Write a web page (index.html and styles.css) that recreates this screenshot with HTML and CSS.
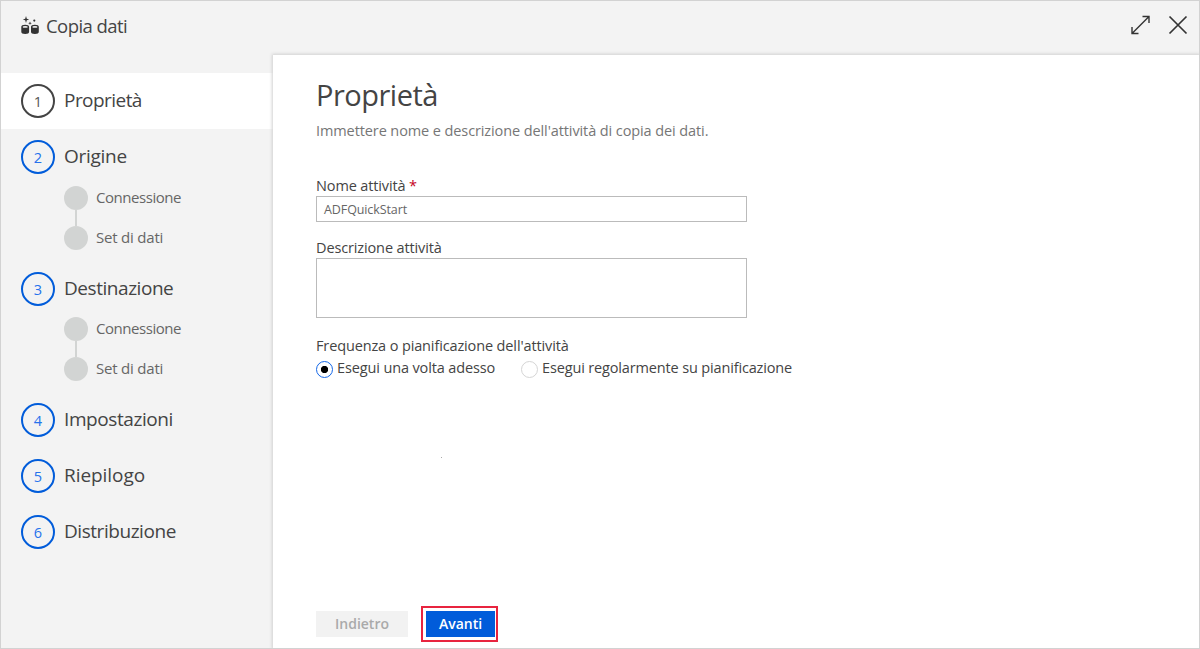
FILE: index.html
```html
<!DOCTYPE html>
<html lang="it">
<head>
<meta charset="utf-8">
<title>Copia dati</title>
<link rel="stylesheet" href="styles.css">
</head>
<body>
<div class="window">
  <header class="topbar">
    <svg class="logo" width="19" height="19" viewBox="0 0 19 19">
      <path d="M5 0l.8 2.700 2.400.8-2.400.8L5 7l-.8-2.700-2.400-.8 2.400-.8z"/>
      <path d="M9 5.500l.5 1.300 1.300.5-1.300.5-.5 1.300-.5-1.300-1.300-.5 1.300-.5z"/>
      <circle cx="13.300" cy="4.600" r="1.100"/>
      <path d="M.3 10.800q0-2 3.900-2t3.900 2v5q0 2.200-3.900 2.200T.3 15.800zM10 10.800q0-2 3.900-2t3.900 2v5q0 2.200-3.900 2.200T10 15.800z"/>
      <ellipse class="lid" cx="4.200" cy="10.900" rx="2.600" ry=".9"/>
      <ellipse class="lid" cx="13.900" cy="10.900" rx="2.600" ry=".9"/>
    </svg>
    <h2 class="app-title">Copia dati</h2>
    <div class="tools">
      <svg class="expand" width="20" height="20" viewBox="0 0 20 20"><path d="M2 18.500L19 1.500M12.500 1.500H19V8M2 12v6.500h6.500"/></svg>
      <svg class="close" width="20" height="20" viewBox="0 0 20 20"><path d="M1.500 1.500l17 17M18.500 1.500l-17 17"/></svg>
    </div>
  </header>
  <div class="body">
    <nav class="steps">
      <div class="step active"><span class="num">1</span><span class="name n1">Proprietà</span></div>
      <div class="step"><span class="num">2</span><span class="name n2">Origine</span></div>
      <div class="subs">
        <div class="sub"><i class="dot"></i><span class="conn">Connessione</span></div>
        <i class="line"></i>
        <div class="sub"><i class="dot"></i><span class="set">Set di dati</span></div>
      </div>
      <div class="step"><span class="num">3</span><span class="name n3">Destinazione</span></div>
      <div class="subs second">
        <div class="sub"><i class="dot"></i><span class="conn">Connessione</span></div>
        <i class="line"></i>
        <div class="sub"><i class="dot"></i><span class="set">Set di dati</span></div>
      </div>
      <div class="step"><span class="num">4</span><span class="name n4">Impostazioni</span></div>
      <div class="step"><span class="num">5</span><span class="name n5">Riepilogo</span></div>
      <div class="step"><span class="num">6</span><span class="name n6">Distribuzione</span></div>
    </nav>
    <main class="panel">
      <h1 class="title"><span>Proprietà</span></h1>
      <p class="intro"><span>Immettere nome e descrizione dell'attività di copia dei dati.</span></p>
      <div class="label first"><span class="l1">Nome attività</span> <span class="req">*</span></div>
      <div class="input"><span>ADFQuickStart</span></div>
      <div class="label second-label"><span class="l2">Descrizione attività</span></div>
      <div class="area"></div>
      <div class="label third"><span class="l3">Frequenza o pianificazione dell'attività</span></div>
      <div class="radios">
        <div class="radio"><i class="knob on"></i><span class="r1">Esegui una volta adesso</span></div>
        <div class="radio regular"><i class="knob"></i><span class="r2">Esegui regolarmente su pianificazione</span></div>
      </div>
      <i class="speck"></i>
      <footer class="actions">
        <div class="button back"><span>Indietro</span></div>
        <div class="ring"><div class="button next"><span>Avanti</span></div></div>
      </footer>
    </main>
  </div>
</div>
</body>
</html>
```

FILE: styles.css
```css
* { box-sizing: border-box; }
body { margin: 0; font-family: "Open Sans", "Noto Sans", sans-serif; color: #444; }
h1, h2, p { margin: 0; font-weight: 400; }
i { display: block; flex: none; }
span { white-space: nowrap; }
.window { width: 1200px; height: 649px; border: 1px solid #d2d2d2; background: #f3f3f3; display: flex; flex-direction: column; overflow: hidden; }
.topbar { height: 54px; flex: none; display: flex; align-items: flex-start; padding: 14px 11px 0 20px; }
.logo { fill: #333; margin-top: 1px; }
.lid { fill: #eee; }
.app-title { font-size: 18.500px; line-height: 24px; margin: -1px 0 0 6px; letter-spacing: -.55px; }
.tools { margin-left: auto; display: flex; gap: 18px; }
.tools svg { fill: none; stroke: #333; }
.expand { stroke-width: 1.400; }
.close { stroke-width: 1.700; }
.body { flex: 1; display: flex; min-height: 0; }
.steps { width: 272px; flex: none; padding-top: 18px; }
.step { height: 56px; display: flex; align-items: center; padding-left: 20px; gap: 9px; }
.active { background: #fff; }
.num { width: 34px; height: 34px; border: 2px solid #015cda; border-radius: 50%; color: #2672ec; font-size: 14.500px; line-height: 31px; text-align: center; }
.active .num { border-color: #444; color: #555; }
.name { font-size: 19px; line-height: 26px; margin-top: -3px; }
.n1 { letter-spacing: -.55px; }
.n2 { letter-spacing: -.28px; }
.n3 { letter-spacing: -.45px; }
.n4 { letter-spacing: -.42px; }
.n5 { letter-spacing: -.05px; }
.n6 { letter-spacing: -.45px; }
.subs { height: 76px; padding: 1px 0 0 63px; }
.second { height: 75px; padding-top: 0; }
.sub { height: 24px; display: flex; align-items: center; gap: 8px; font-size: 15px; color: #666; }
.sub span { line-height: 20px; margin-top: -2px; }
.conn { letter-spacing: -.45px; }
.set { letter-spacing: -.2px; }
.dot { width: 24px; height: 24px; border-radius: 50%; background: #d2d4d3; }
.line { width: 2px; height: 16px; margin-left: 11px; background: #d2d4d3; }
.panel { flex: 1; background: #fff; padding: 21px 0 0 43px; box-shadow: 0 0 3px 1px #d0d0d0; display: flex; flex-direction: column; }
.title { font-size: 29px; line-height: 38px; letter-spacing: -.5px; }
.intro { font-size: 14.500px; line-height: 20px; margin-top: 7px; color: #767676; letter-spacing: -.1px; }
.label { font-size: 14.500px; line-height: 20px; letter-spacing: -.13px; }
.first { margin-top: 35px; }
.req { color: #c50022; }
.input { width: 431px; height: 26px; border: 1px solid #bbb; padding-left: 7px; font-size: 12.500px; line-height: 25px; color: #666; letter-spacing: -.1px; }
.second-label { margin-top: 16px; }
.area { width: 431px; height: 60px; border: 1px solid #bbb; }
.third { margin-top: 18px; }
.radios { display: flex; height: 24px; font-size: 14.500px; line-height: 20px; margin-top: 2px; }
.r1 { letter-spacing: -.13px; }
.r2 { letter-spacing: -.15px; }
.radio { display: flex; width: 205px; gap: 4px; }
.knob { width: 17px; height: 17px; border-radius: 50%; border: 1px solid #d5d5d5; margin-top: 3px; }
.on { border: 1.500px solid #1467e8; background: radial-gradient(circle, #000 3.300px, #fff 4px); }
.speck { width: 1px; height: 1px; background: #aaa; margin: 75px 0 0 125px; }
.actions { margin-top: auto; padding-bottom: 6px; display: flex; align-items: center; gap: 13px; }
.button { height: 26px; font-size: 14px; line-height: 26px; font-weight: 600; text-align: center; }
.back { width: 92px; background: #f2f2f2; color: #aaa; }
.ring { border: 2px solid #e8243f; padding: 3px; width: 77px; height: 36px; }
.next { width: 69px; margin-right: -2px; background: #015cda; color: #fff; }
```
